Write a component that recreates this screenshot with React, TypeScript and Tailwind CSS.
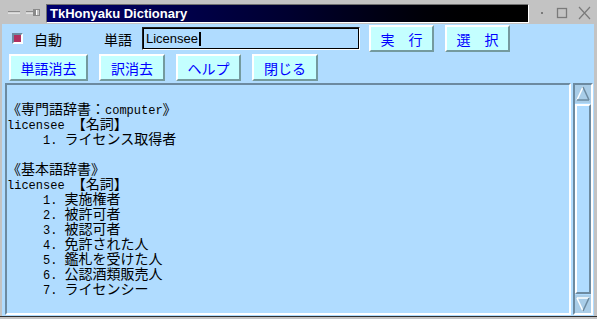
const jp = '[font-family:"Noto_Sans_CJK_JP","Noto_Sans_CJK_SC",sans-serif]'

const Btn = ({ label, w }: { label: string; w: string }) => (
  <div
    className={`${w} flex h-[27px] shrink-0 items-center justify-center border-2 border-t-white border-l-white border-b-[#749a9e] border-r-[#749a9e] bg-[#c4ffff] text-[14px] leading-none text-[#0000ff] ${jp}`}
  >
    {label}
  </div>
)

type Line = { lat?: string; ja?: string; tail?: string }

const lines: Line[] = [
  {},
  { ja: '《専門語辞書：', lat: 'computer', tail: '》' },
  { lat: 'licensee ', ja: '【名詞】' },
  { lat: '     1. ', ja: 'ライセンス取得者' },
  {},
  { ja: '《基本語辞書》' },
  { lat: 'licensee ', ja: '【名詞】' },
  { lat: '     1. ', ja: '実施権者' },
  { lat: '     2. ', ja: '被許可者' },
  { lat: '     3. ', ja: '被認可者' },
  { lat: '     4. ', ja: '免許された人' },
  { lat: '     5. ', ja: '鑑札を受けた人' },
  { lat: '     6. ', ja: '公認酒類販売人' },
  { lat: '     7. ', ja: 'ライセンシー' },
]

const Mono = ({ t }: { t: string }) => (
  <span className='font-["Liberation_Mono",monospace] text-[12px] leading-[15px]'>{t}</span>
)
const Ja = ({ t }: { t: string }) => (
  <span className={`${jp} text-[14px] leading-[15px]`}>{t}</span>
)

const TextLine = ({ l }: { l: Line }) => {
  const jaFirst = l.ja && l.tail !== undefined
  return (
    <div className="h-[15px] whitespace-pre text-[12px] leading-[15px] text-black">
      {jaFirst ? (
        <>
          <Ja t={l.ja!} />
          <Mono t={l.lat!} />
          <Ja t={l.tail!} />
        </>
      ) : (
        <>
          {l.lat ? <Mono t={l.lat} /> : null}
          {l.ja ? <Ja t={l.ja} /> : null}
        </>
      )}
    </div>
  )
}

const Arrow = ({ down }: { down?: boolean }) => (
  <svg width="16" height="18" viewBox="0 0 16 18" className="block">
    <rect x="0" y="0" width="16" height="18" fill="#a9cde8" />
    {down ? (
      <>
        <path d="M2 3 L14 3" stroke="white" strokeWidth="1.5" />
        <path d="M2 3 L8 16" stroke="white" strokeWidth="1.5" />
        <path d="M14 3 L8 16" stroke="#6c8aa0" strokeWidth="1.5" />
      </>
    ) : (
      <>
        <path d="M8 2 L2 15" stroke="white" strokeWidth="1.5" />
        <path d="M8 2 L14 15" stroke="#6c8aa0" strokeWidth="1.5" />
        <path d="M2 15 L14 15" stroke="#6c8aa0" strokeWidth="1.5" />
      </>
    )}
  </svg>
)

export default function App() {
  return (
    <div className="flex h-[319px] w-[597px] flex-col overflow-hidden bg-[#c3c3c3]">
      {/* title bar */}
      <div className="flex h-[24px] shrink-0 items-start">
        <svg width="46" height="24" viewBox="0 0 46 24" className="shrink-0">
          <rect x="8" y="11" width="12" height="1.5" fill="#8a8a8a" />
          <rect x="8" y="12.5" width="12" height="1" fill="white" />
          <rect x="26" y="11" width="7" height="1.5" fill="#8a8a8a" />
          <rect x="26" y="12.5" width="7" height="1" fill="white" />
          <rect x="33" y="9" width="2" height="7" fill="#8a8a8a" />
          <rect x="35.5" y="9.5" width="4" height="6" fill="none" stroke="#8a8a8a" strokeWidth="1" />
          <rect x="36" y="10" width="1" height="5" fill="white" />
        </svg>
        <div className="mt-[4px] flex h-[19px] w-[483px] shrink-0 items-center border border-t-[#707070] border-l-[#707070] border-b-white border-r-white bg-gradient-to-r from-[#00006e] via-[#000030] to-black pl-[3px] font-['Liberation_Sans',sans-serif] text-[13px] font-bold text-white">
          TkHonyaku Dictionary
        </div>
        <svg width="68" height="24" viewBox="0 0 68 24" className="shrink-0">
          <rect x="12" y="12" width="2" height="2" fill="#7a7a7a" />
          <rect x="28.5" y="8.5" width="9" height="9" fill="none" stroke="#7a7a7a" strokeWidth="1.3" />
          <path d="M50 7 L61 19 M61 7 L50 19" stroke="#7a7a7a" strokeWidth="1.2" />
        </svg>
      </div>

      {/* body */}
      <div className="ml-[2px] mr-[3px] flex h-[292px] flex-col bg-[#b0dcff]">
        <div className="mt-px flex h-[27px] items-center">
          <div className="ml-[10px] h-[11px] w-[11px] shrink-0 border-2 border-t-[#6c8aa0] border-l-[#6c8aa0] border-b-white border-r-white bg-[#b03060]" />
          <span className={`ml-[11px] text-[14px] leading-none text-black ${jp}`}>自動</span>
          <span className={`ml-[42px] text-[14px] leading-none text-black ${jp}`}>単語</span>
          <div className="ml-[10px] h-[23px] w-[218px] shrink-0 border border-t-[#202020] border-l-[#202020] border-b-white border-r-white">
            <div className="flex h-full items-center border border-black pl-[2px] font-['Liberation_Sans',sans-serif] text-[13px] leading-none text-black">
              Licensee
              <span className="ml-px h-[14px] w-[2px] bg-black" />
            </div>
          </div>
          <div className="ml-[9px] flex gap-[11px]">
            <Btn label="実　行" w="w-[65px]" />
            <Btn label="選　択" w="w-[65px]" />
          </div>
        </div>

        <div className="mt-[2px] ml-[7px] flex h-[27px] gap-[11px]">
          <Btn label="単語消去" w="w-[79px]" />
          <Btn label="訳消去" w="w-[66px]" />
          <Btn label="ヘルプ" w="w-[65px]" />
          <Btn label="閉じる" w="w-[66px]" />
        </div>

        <div className="mt-[2px] ml-[3px] mr-px flex h-[232px] gap-[2px]">
          <div className="w-[566px] shrink-0 overflow-hidden border-2 border-t-[#6c8aa0] border-l-[#6c8aa0] border-b-white border-r-white pt-px">
            {lines.map((l, i) => (
              <TextLine key={i} l={l} />
            ))}
          </div>
          <div className="flex w-[20px] shrink-0 flex-col border-2 border-t-[#6c8aa0] border-l-[#6c8aa0] border-b-white border-r-white">
            <Arrow />
            <div className="my-px flex-1 border-2 border-t-white border-l-white border-b-[#6c8aa0] border-r-[#6c8aa0]" />
            <Arrow down />
          </div>
        </div>
      </div>
      <div className="h-px bg-[#303030]" />
    </div>
  )
}
